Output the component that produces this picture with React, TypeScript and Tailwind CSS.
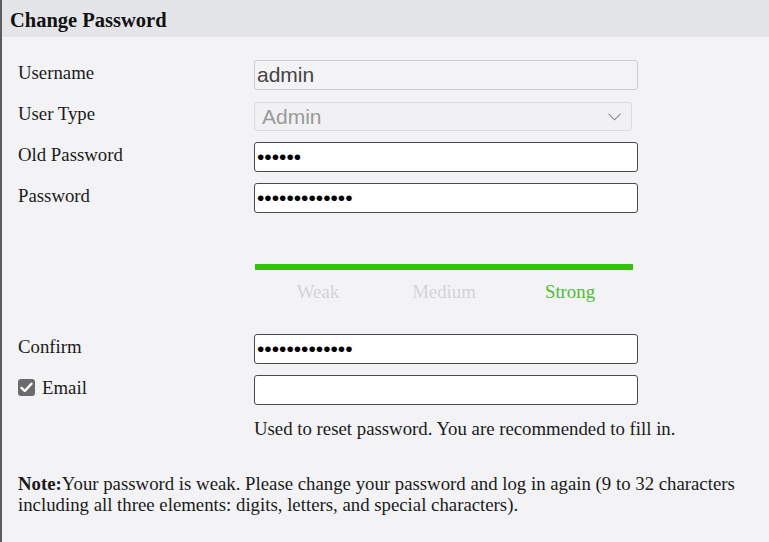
import React from "react";

const serif = { fontFamily: '"Liberation Serif", "Times New Roman", serif' };
const sans = { fontFamily: '"Liberation Sans", Arial, sans-serif' };

function Row({ label, children, className = "" }: { label: React.ReactNode; children: React.ReactNode; className?: string }) {
  return (
    <div className={"flex items-center h-[30px] " + className}>
      <div className="w-[236px] shrink-0 text-[18.8px] text-[#1a1a1a] leading-none pb-[4px]">{label}</div>
      {children}
    </div>
  );
}

const inputCls =
  "w-[384px] h-[30px] border border-[#4a4a4a] rounded-[3px] bg-white px-[2px] text-[21px] text-black outline-none";

export default function App() {
  return (
    <div className="w-[769px] h-[542px] bg-[#f3f3f5] border-l-2 border-[#5c5c5c] overflow-hidden" style={serif}>
      <div className="h-[37px] bg-[#e4e5e9] pl-[8px] flex items-center pt-[3px]">
        <h1 className="text-[20.5px] font-bold text-[#111] leading-none">Change Password</h1>
      </div>
      <div className="pl-[16px] pt-[23px]">
        <Row label="Username">
          <input
            readOnly
            value="admin"
            className="w-[384px] h-[30px] border border-[#cacaca] rounded-[3px] bg-[#f3f3f5] px-[2px] text-[21px] text-[#444] outline-none"
            style={sans}
          />
        </Row>
        <Row label="User Type" className="mt-[11px]">
          <div className="relative w-[378px] h-[29px] border border-[#dcdcde] rounded-[3px] bg-[#f1f1f3] flex items-center pl-[7px]">
            <span className="text-[21px] text-[#9a9a9a] leading-none" style={sans}>Admin</span>
            <svg className="absolute right-[10px] top-[10px]" width="13" height="8" viewBox="0 0 13 8">
              <path d="M0.5 0.8 L6.5 6.8 L12.5 0.8" fill="none" stroke="#8a8a8a" strokeWidth="1.1" />
            </svg>
          </div>
        </Row>
        <Row label="Old Password" className="mt-[11px]">
          <input readOnly type="password" value="123456" className={inputCls} style={sans} />
        </Row>
        <Row label="Password" className="mt-[11px]">
          <input readOnly type="password" value="abcdefghijklm" className={inputCls} style={sans} />
        </Row>
        <div className="ml-[237px] mt-[51px] w-[378px]">
          <div className="h-[6px] bg-[#35c00d]" />
          <div className="grid grid-cols-3 mt-[11px] text-[18.8px] leading-[22px] text-center">
            <span className="text-[#d4d4d6]">Weak</span>
            <span className="text-[#d4d4d6]">Medium</span>
            <span className="text-[#4cbd36]">Strong</span>
          </div>
        </div>
        <Row label="Confirm" className="mt-[31px]">
          <input readOnly type="password" value="abcdefghijklm" className={inputCls} style={sans} />
        </Row>
        <Row
          label={
            <span className="flex items-center gap-[7px]">
              <span className="w-[17px] h-[17px] rounded-[3px] bg-[#6b6b6d] flex items-center justify-center">
                <svg width="13" height="11" viewBox="0 0 13 11">
                  <path d="M1.5 5.8 L4.8 9 L11.5 1.8" fill="none" stroke="#fff" strokeWidth="2.4" strokeLinecap="round" strokeLinejoin="round" />
                </svg>
              </span>
              <span>Email</span>
            </span>
          }
          className="mt-[11px]"
        >
          <input readOnly value="" className={inputCls} style={sans} />
        </Row>
        <p className="ml-[236px] mt-[13px] text-[18.8px] leading-[22px] text-[#1a1a1a]">
          Used to reset password. You are recommended to fill in.
        </p>
        <p className="mt-[33px] pr-[10px] text-[18.8px] leading-[21px] text-[#1a1a1a]">
          <b>Note:</b>Your password is weak. Please change your password and log in again (9 to 32 characters including all three elements: digits, letters, and special characters).
        </p>
      </div>
    </div>
  );
}
